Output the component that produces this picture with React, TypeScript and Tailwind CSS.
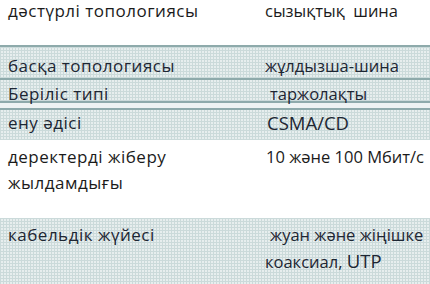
const grid =
  "bg-[#e7eeee] bg-[repeating-linear-gradient(90deg,#cbdada_0_1px,transparent_1px_3px),repeating-linear-gradient(0deg,#cbdada_0_1px,transparent_1px_3px)]"

function Cell({ children, className = "" }: { children: React.ReactNode; className?: string }) {
  return <div className={className}>{children}</div>
}

// right-hand column is set a touch tighter than the labels
const right = "text-[16.5px] tracking-normal whitespace-nowrap"

export default function App() {
  return (
    <div className="w-[430px] h-[284px] overflow-hidden bg-white text-[17px] leading-[26px] tracking-[0.5px] text-[#1b1b1b] font-['Open_Sans',sans-serif]">

      {/* дәстүрлі */}
      <div className="h-[45px] grid grid-cols-[257px_1fr] px-[8px] -mt-[2px]">
        <Cell>дәстүрлі топологиясы</Cell>
        <Cell className={right}>сызықтық&nbsp; шина</Cell>
      </div>

      <div className="h-[2px] mt-[2px] bg-[#8eaaab]" />
      <div className={`h-[31px] grid grid-cols-[257px_1fr] px-[8px] pt-[6px] text-[#1d2633] ${grid}`}>
        <Cell>басқа топологиясы</Cell>
        <Cell className={right}>жұлдызша-шина</Cell>
      </div>

      <div className="h-[2px] bg-[#8eaaab]" />
      <div className={`h-[21px] grid grid-cols-[257px_1fr] px-[8px] text-[#1d2633] ${grid}`}>
        <Cell className="mt-[1px]">Беріліс типі</Cell>
        <Cell className={`mt-[1px] pl-[5px] ${right}`}>таржолақты</Cell>
      </div>

      <div className="h-[2px] bg-[#8eaaab]" />
      <div className="h-[5px] bg-[#eef3f3]" />
      <div className="h-[2px] bg-[#8eaaab]" />
      <div className={`h-[30px] grid grid-cols-[257px_1fr] px-[8px] text-[#1d2633] ${grid}`}>
        <Cell>ену әдісі</Cell>
        <Cell className="text-[18.5px] tracking-normal pl-[2px]">CSMA/CD</Cell>
      </div>

      {/* жылдамдығы */}
      <div className="h-[78px] grid grid-cols-[257px_1fr] px-[8px] pt-[4px]">
        <Cell>
          деректерді жіберу
          <br />
          жылдамдығы
        </Cell>
        <Cell className={`pl-[1px] ${right}`}>10 және 100 Мбит/с</Cell>
      </div>

      <div className={`h-[70px] grid grid-cols-[257px_1fr] px-[8px] pt-[4px] text-[#1d2633] ${grid}`}>
        <Cell>кабельдік жүйесі</Cell>
        <Cell className={right}>
          <div className="pl-[5px]">жуан және жіңішке</div>
          <div>
            коаксиал, <span className="text-[18.5px]">UTP</span>
          </div>
        </Cell>
      </div>

    </div>
  )
}
